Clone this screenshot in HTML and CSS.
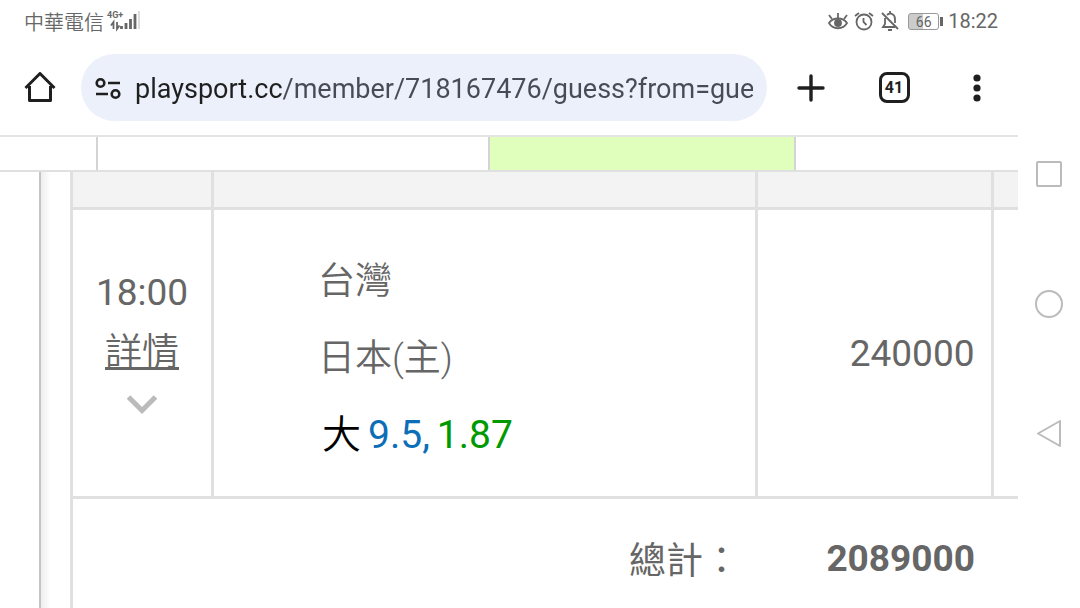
FILE: index.html
```
<!DOCTYPE html>
<html lang="zh-Hant">

<head>
    <title>playsport.cc</title>
    <meta charset="utf-8">
    <meta name="viewport" content="width=device-width, initial-scale=1.0">
    <link rel="stylesheet" href="styles.css">
</head>

<body>
    <div class="screen">
        <header class="status">
            <span class="carrier">中華電信</span>
            <svg class="signal" width="34" height="26" viewBox="0 -2 34 26">
                <text x="1" y="8" class="signal-text">4G+</text>
                <path d="M7.500 19v-7L5 15.500M11 12v7l2.500-3.500" fill="none" stroke="#666" stroke-width="1.800" />
                <path d="M15.500 16v3M20 13v6M24.500 9v10M29 4v15" stroke="#666" stroke-width="2.800" />
                <path d="M33 1v18" stroke="#ddd" stroke-width="2" />
            </svg>
            <div class="status-icons">
                <svg width="20" height="20" viewBox="0 0 20 20" fill="none" stroke="#666" stroke-width="1.800">
                    <path d="M1 12C5 6 15 6 19 12C15 19 5 19 1 12z" />
                    <circle cx="10" cy="12" r="3" fill="#666" />
                    <path d="M10 2v5M4 8L1 4M16 8l3-4" />
                </svg>
                <svg width="20" height="20" viewBox="0 0 20 20" fill="none" stroke="#666" stroke-width="1.800">
                    <circle cx="10" cy="11" r="7.500" />
                    <path d="M9.500 7v4l3 3M1 5l4-3M19 5l-4-3" />
                </svg>
                <svg width="20" height="20" viewBox="0 0 20 20" fill="none" stroke="#666" stroke-width="1.800">
                    <path d="M2 2l16 16M5 7v6l-2 3h12M7 4c3-3 8-1 8 4v4M8 19h4M10 0v3" />
                </svg>
            </div>
            <span class="battery">66</span>
            <time class="clock">18:22</time>
        </header>

        <nav class="toolbar">
            <button class="icon-knap home" aria-label="首頁">
                <svg width="32" height="32" viewBox="0 0 32 32" fill="none" stroke="#1f1f1f" stroke-width="3" stroke-linejoin="round">
                    <path d="M1.500 16L16 1.500L30.500 16M5.500 14v14.500h21V14" />
                </svg>
            </button>
            <div class="adresse">
                <svg width="26" height="24" viewBox="0 0 26 24" fill="none" stroke="#1f1f1f" stroke-width="2.600">
                    <circle cx="5.500" cy="6" r="3.800" />
                    <path d="M13 6h12M1 17h12" />
                    <circle cx="20.500" cy="17" r="3.800" />
                </svg>
                <input class="url" type="text" aria-label="網址" value="playsport.cc/member/718167476/guess?from=gue">
            </div>
            <button class="icon-knap" aria-label="新分頁">
                <svg width="28" height="28" viewBox="0 0 28 28" stroke="#1f1f1f" stroke-width="3.400" stroke-linecap="round">
                    <path d="M14 2v24M2 14h24" />
                </svg>
            </button>
            <button class="icon-knap" aria-label="分頁"><span class="antal">41</span></button>
            <button class="icon-knap" aria-label="選單">
                <svg width="8" height="28" viewBox="0 0 8 28" fill="#1f1f1f">
                    <circle cx="4" cy="4" r="3.600" />
                    <circle cx="4" cy="14" r="3.600" />
                    <circle cx="4" cy="24" r="3.600" />
                </svg>
            </button>
        </nav>

        <div class="faner">
            <div></div>
            <div></div>
            <div class="valgt"></div>
            <div></div>
        </div>

        <main class="side">
            <section class="indhold">
                <table>
                    <colgroup>
                        <col class="tid">
                        <col>
                        <col class="beloeb">
                        <col class="rest">
                    </colgroup>
                    <thead>
                        <tr>
                            <th></th>
                            <th></th>
                            <th></th>
                            <th></th>
                        </tr>
                    </thead>
                    <tbody>
                        <tr class="kamp">
                            <td class="kamp-tid">
                                <p>18:00</p>
                                <a href="#">詳情</a>
                                <svg width="32" height="20" viewBox="0 0 32 20" fill="none" stroke="#bbb" stroke-width="5">
                                    <path d="M2.500 2L16 15.500L29.500 2" />
                                </svg>
                            </td>
                            <td class="hold">
                                <p>台灣</p>
                                <p>日本(主)</p>
                                <p class="odds">大<span class="linje">9.5,</span><span class="kurs">1.87</span></p>
                            </td>
                            <td class="tal">240000</td>
                            <td></td>
                        </tr>
                        <tr class="total">
                            <td class="total-navn" colspan="2">總計：</td>
                            <td class="tal" colspan="2">2089000</td>
                        </tr>
                    </tbody>
                </table>
            </section>
        </main>
    </div>

    <aside class="system">
        <button class="icon-knap" aria-label="最近">
            <svg width="28" height="28" viewBox="0 0 28 28" fill="none" stroke="#bbb" stroke-width="2">
                <rect x="2" y="2" width="24" height="24" rx="1" />
            </svg>
        </button>
        <button class="icon-knap" aria-label="主畫面">
            <svg width="28" height="28" viewBox="0 0 28 28" fill="none" stroke="#bbb" stroke-width="2">
                <circle cx="14" cy="14" r="13" />
            </svg>
        </button>
        <button class="icon-knap" aria-label="返回">
            <svg width="28" height="28" viewBox="0 0 28 28" fill="none" stroke="#bbb" stroke-width="2" stroke-linejoin="round">
                <path d="M25 1v25L3 13.500z" />
            </svg>
        </button>
    </aside>
</body>

</html>
```

FILE: styles.css
```
* {
    box-sizing: border-box;
}

body {
    margin: 0;
    height: 100vh;
    display: flex;
    overflow: hidden;
    background: white;
    color: #666;
    font-family: Roboto, "Noto Sans CJK TC", sans-serif;
}

p {
    margin: 0;
}

.screen {
    flex: 1;
    min-width: 0;
    display: flex;
    flex-direction: column;
}

/* statuslinje */

.status {
    height: 42px;
    padding: 0 20px 0 24px;
    display: flex;
    align-items: center;
    font-size: 20px;
}

.carrier {
    font-weight: 350;
}

.signal {
    margin-left: 2px;
}

.signal-text {
    font-size: 9px;
    font-weight: 700;
    fill: #666;
}

.status-icons {
    margin-left: auto;
    display: flex;
    gap: 6px;
}

.battery {
    position: relative;
    width: 31px;
    height: 17px;
    margin-left: 8px;
    border: 1px solid #999;
    border-radius: 3px;
    background: linear-gradient(90deg, #ccc 50%, white 50%);
    font-size: 14px;
    line-height: 16px;
    text-align: center;
}

.battery::after {
    content: "";
    position: absolute;
    top: 3px;
    right: -5px;
    width: 3px;
    height: 9px;
    background: #666;
}

.clock {
    margin-left: 9px;
}

/* browserens værktøjslinje */

.toolbar {
    height: 95px;
    padding: 0 13px 2px 12px;
    display: flex;
    align-items: center;
    border-bottom: 2px solid #e4e4e4;
}

.icon-knap {
    width: 56px;
    height: 56px;
    padding: 0;
    border: 0;
    background: none;
    display: flex;
    align-items: center;
    justify-content: center;
}

.adresse {
    flex: 1;
    min-width: 0;
    height: 67px;
    padding: 2px 14px 0;
    display: flex;
    align-items: center;
    gap: 14px;
    border-radius: 34px;
    background: #ecf0fa;
}

.url {
    flex: 1;
    min-width: 0;
    padding: 0;
    border: 0;
    font-family: Roboto, sans-serif;
    font-size: 27px;
    line-height: 36px;
    color: transparent;
    background: linear-gradient(90deg, #1f1f1f 148px, #474b55 148px);
    -webkit-background-clip: text;
    background-clip: text;
}

.home {
    margin-right: 13px;
}

.adresse ~ .icon-knap {
    margin-left: 27px;
}

.adresse + .icon-knap {
    margin-left: 16px;
}

.antal {
    width: 31px;
    height: 31px;
    border: 3px solid #1f1f1f;
    border-radius: 8px;
    color: #1f1f1f;
    font-family: Roboto, sans-serif;
    font-size: 16px;
    font-weight: 700;
    line-height: 26px;
}

/* faner */

.faner {
    height: 35px;
    display: grid;
    grid-template-columns: 98px 392fr 306fr 222fr;
    border-bottom: 2px solid #e0e0e0;
}

.faner div {
    border-right: 2px solid #d4d4d4;
}

.faner div:last-child {
    border-right: 0;
}

.faner .valgt {
    background: #e1ffbc;
}

/* tabel */

.side {
    flex: 1;
    min-height: 0;
    padding-left: 39px;
}

.indhold {
    height: 100%;
    padding-left: 29px;
    border-left: 2px solid #c4c4c4;
    background: linear-gradient(90deg, #eee, white 10px);
}

table {
    width: 100%;
    height: 100%;
    table-layout: fixed;
    border-collapse: collapse;
    border-left: 3px solid #e0e0e0;
}

.tid {
    width: 141px;
}

.beloeb {
    width: 236px;
}

.rest {
    width: 26px;
}

th {
    height: 36px;
    background: #f3f3f3;
}

th,
td {
    padding: 0;
    border-right: 3px solid #e0e0e0;
    border-bottom: 3px solid #e0e0e0;
}

th:last-child,
td:last-child {
    border-right: 0;
}

.kamp {
    height: 289px;
    font-size: 37px;
}

.kamp-tid {
    padding-bottom: 28px;
    text-align: center;
    line-height: 60px;
}

.kamp-tid a {
    display: block;
    color: #666;
    font-weight: 350;
    text-decoration-thickness: 3px;
}

.kamp-tid svg {
    display: block;
    margin: 12px auto 0;
}

.hold {
    padding: 12px 0 0 104px;
    font-weight: 350;
    line-height: 77px;
}

.odds {
    padding-left: 4px;
    color: black;
    font-size: 39px;
}

.linje,
.kurs {
    margin-left: 7px;
    font-weight: 400;
}

.linje {
    color: #0d6eb8;
}

.kurs {
    color: #090;
}

.tal {
    padding: 2px 16px 0 0;
    text-align: right;
}

.total {
    font-size: 37px;
}

.total td {
    padding-top: 10px;
    border: 0;
    text-align: right;
}

.total .total-navn {
    padding-right: 16px;
}

.total .tal {
    padding-right: 43px;
    font-weight: 700;
}

/* systemknapper */

.system {
    width: 62px;
    padding: 146px 3px 0;
    display: flex;
    flex-direction: column;
    gap: 74px;
}
```
